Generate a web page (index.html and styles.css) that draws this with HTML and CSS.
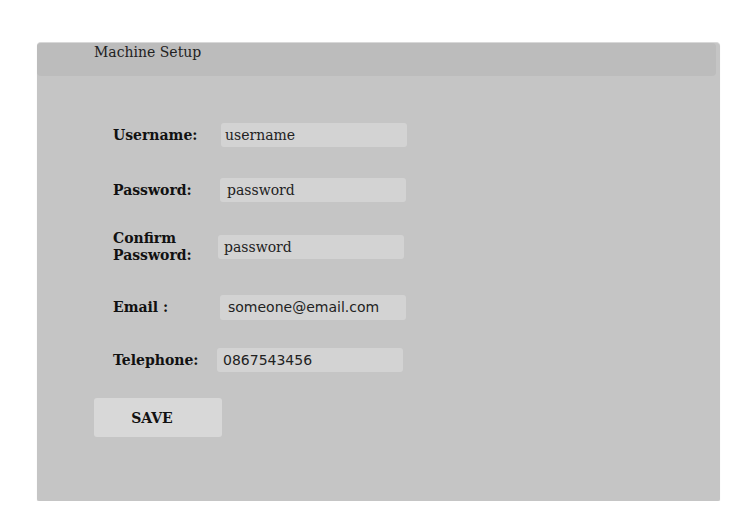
FILE: index.html
```html
<!DOCTYPE html>
<html>
<head>
<meta charset="utf-8">
<link rel="stylesheet" href="styles.css">
</head>
<body>
<div class="panel">
  <div class="panel-header">Machine Setup</div>
  <form class="form">
    <div class="row row-user">
      <label class="label">Username:</label>
      <div class="field field-user serif">username</div>
    </div>
    <div class="row row-pass">
      <label class="label">Password:</label>
      <div class="field field-pass serif">password</div>
    </div>
    <div class="row row-confirm">
      <label class="label">Confirm<br>Password:</label>
      <div class="field field-confirm serif">password</div>
    </div>
    <div class="row row-email">
      <label class="label">Email :</label>
      <div class="field field-email sans">someone@email.com</div>
    </div>
    <div class="row row-tel">
      <label class="label">Telephone:</label>
      <div class="field field-tel sans">0867543456</div>
    </div>
    <button type="button" class="save">SAVE</button>
  </form>
</div>
</body>
</html>
```
FILE: styles.css
```css
html, body {
  margin: 0;
  padding: 0;
  background: #ffffff;
}
body {
  padding: 42px 0 0 37px;
  font-family: "DejaVu Serif", serif;
  color: #111;
}
.panel {
  width: 683px;
  height: 459px;
  background: #c5c5c5;
  border-top: 1px solid #d8d8d8;
  border-radius: 4px 4px 2px 2px;
  box-shadow: 0 1px 1px rgba(0,0,0,0.12);
  box-sizing: border-box;
}
.panel-header {
  width: 679px;
  height: 33px;
  background: #bcbcbc;
  border-radius: 4px;
  box-sizing: border-box;
  padding: 0 0 0 57px;
  font-size: 14px;
  line-height: 18px;
  color: #222;
}
.form {
  display: flex;
  flex-direction: column;
  padding: 47px 0 0 57px;
}
.row {
  display: flex;
  align-items: center;
  height: 24px;
}
.label {
  width: 107px;
  padding-left: 19px;
  box-sizing: content-box;
  font-weight: bold;
  font-size: 14px;
  line-height: 17px;
  color: #111;
  flex-shrink: 0;
}
.field {
  height: 24px;
  width: 186px;
  background: #d3d3d3;
  border-radius: 3px;
  box-sizing: border-box;
  padding-left: 4px;
  font-size: 14px;
  line-height: 24px;
  color: #222;
  flex-shrink: 0;
}
.serif { font-family: "DejaVu Serif", serif; }
.sans { font-family: "DejaVu Sans", sans-serif; }
.row-pass { margin-top: 31px; }
.row-confirm { margin-top: 33px; }
.row-email { margin-top: 36px; height: 25px; }
.row-tel { margin-top: 28px; }
.field-user { margin-left: 1px; }
.field-pass { margin-left: 0; padding-left: 7px; }
.field-confirm { margin-left: -2px; padding-left: 6px; }
.field-email { margin-left: 0; padding-left: 8px; height: 25px; line-height: 25px; }
.field-tel { margin-left: -3px; padding-left: 6px; }
.save {
  align-self: flex-start;
  margin-top: 26px;
  width: 128px;
  height: 39px;
  background: #d8d8d8;
  border: none;
  border-radius: 3px;
  font-family: "DejaVu Serif", serif;
  font-weight: bold;
  font-size: 14px;
  color: #111;
  padding: 0 12px 0 0;
}
```
